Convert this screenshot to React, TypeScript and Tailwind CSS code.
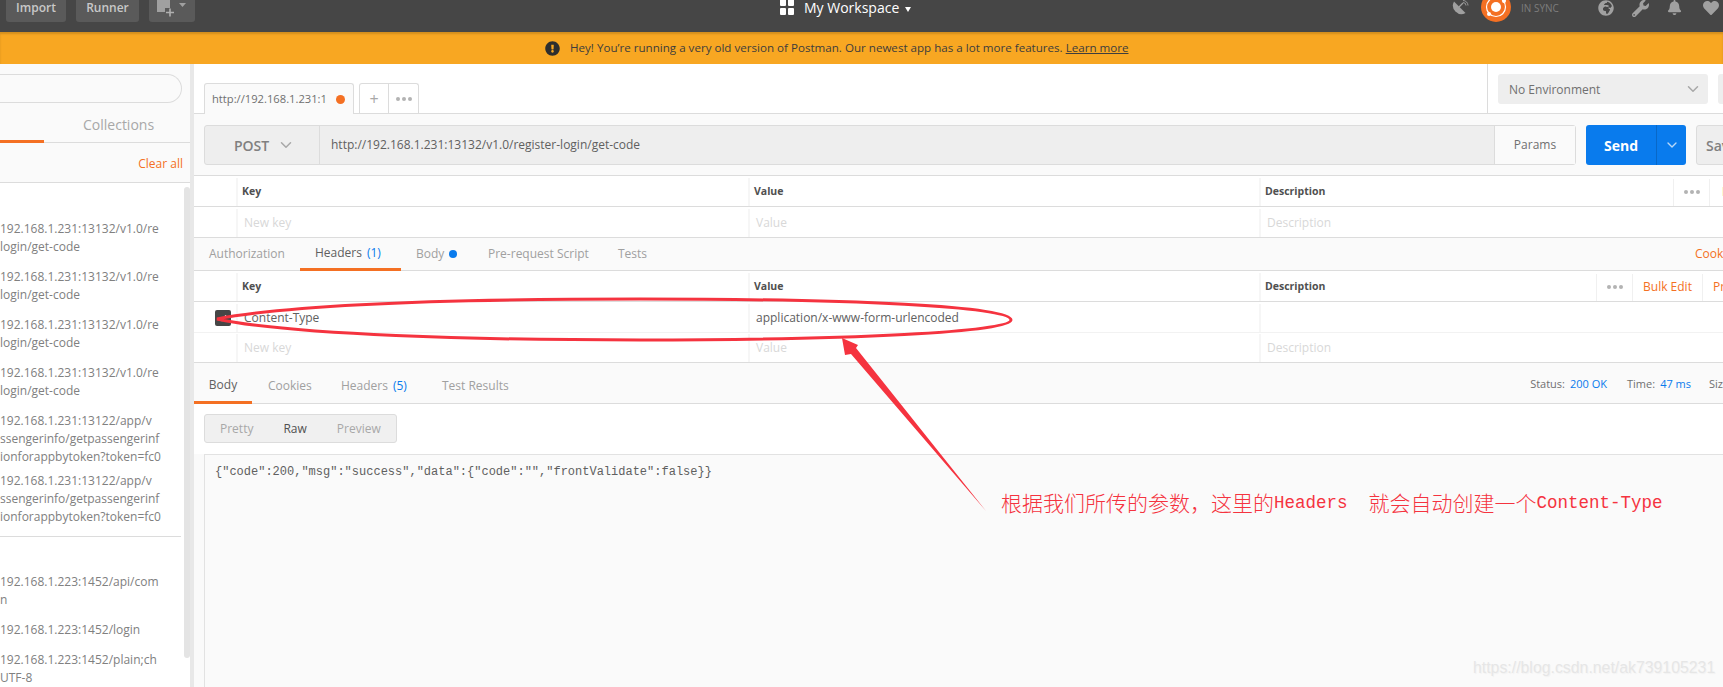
import { ReactNode } from 'react';
import { FaBell, FaExclamationCircle, FaGlobeAfrica, FaHeart, FaWrench } from 'react-icons/fa';
import { LuChevronDown } from 'react-icons/lu';

const registerUrl = ['192.168.1.231:13132/v1.0/re', 'login/get-code'];
const tokenUrl = ['192.168.1.231:13122/app/v', 'ssengerinfo/getpassengerinf', 'ionforappbytoken?token=fc0'];

const Dots = () => (
  <span className="flex gap-[2px]">
    <i className="size-[4px] rounded-full bg-[#b3b3b3]" />
    <i className="size-[4px] rounded-full bg-[#b3b3b3]" />
    <i className="size-[4px] rounded-full bg-[#b3b3b3]" />
  </span>
);

const HistoryItem = ({ lines, className = 'mb-[12px]' }: { lines: string[]; className?: string }) => (
  <div className={`${className} text-[12px] leading-[18px] text-[#808080] whitespace-nowrap`}>
    {lines.map((line) => (
      <div key={line}>{line}</div>
    ))}
  </div>
);

const TopBar = () => (
  <div className="h-8 shrink-0 flex items-start overflow-hidden bg-[#464646] text-[#c8c8c8]">
    <div className="ml-[6px] w-[60px] h-[22px] rounded-b-[3px] bg-[#5a5a5a] text-center text-[12px] font-semibold leading-[16px]">Import</div>
    <div className="ml-[10px] w-[63px] h-[22px] rounded-b-[3px] bg-[#5a5a5a] text-center text-[12px] font-semibold leading-[16px]">Runner</div>
    <div className="ml-[10px] w-[46px] h-[22px] rounded-b-[3px] bg-[#5a5a5a] flex items-start justify-center">
      <svg width="32" height="18" viewBox="0 0 32 18">
        <rect x="1" y="0" width="13" height="12" fill="#a0a0a0" />
        <rect x="9" y="8" width="10" height="10" fill="#5a5a5a" />
        <path d="M14 8.500v8M10 12.500h8" stroke="#b0b0b0" strokeWidth="1.600" />
        <path d="M23 3h7l-3.500 4z" fill="#a0a0a0" />
      </svg>
    </div>
    <div className="ml-[585px] flex items-center h-4 text-white">
      <span className="grid grid-cols-2 gap-[2px] w-[14px] -mt-[2px]">
        <i className="h-[7px] rounded-[1px] bg-white" />
        <i className="h-[7px] rounded-[1px] bg-white" />
        <i className="h-[7px] rounded-[1px] bg-white" />
        <i className="h-[7px] rounded-[1px] bg-white" />
      </span>
      <span className="ml-[10px] text-[14px] leading-[16px]">My Workspace</span>
      <span className="ml-[6px] mt-[2px] border-x-[3.500px] border-t-[5px] border-x-transparent border-t-white" />
    </div>
    <div className="ml-auto flex items-start text-[#a0a0a0]">
      <svg width="17" height="16" viewBox="0 0 17 16" fill="#a0a0a0">
        <path d="M2 1.500A8.500 8.500 0 0 0 13.500 13z" />
        <path d="M7 7l4-4" stroke="#a0a0a0" strokeWidth="1.200" />
        <path d="M11 0.500a5 5 0 0 1 5 5M11 2.500a3 3 0 0 1 3 3" fill="none" stroke="#a0a0a0" strokeWidth="0.900" />
      </svg>
      <svg width="30" height="30" viewBox="0 0 30 30" className="ml-[12px] -mt-[8px]">
        <circle cx="15" cy="15" r="15" fill="#f47023" />
        <circle cx="15" cy="15" r="9.500" fill="none" stroke="#fff" strokeWidth="1.200" />
        <circle cx="15" cy="15" r="5" fill="#fff" />
        <circle cx="23" cy="9" r="2" fill="#fff" />
        <circle cx="8" cy="22" r="2" fill="#fff" />
      </svg>
      <span className="ml-[10px] w-[77px] text-[10px] leading-[16px] text-[#7d7d7d]">IN SYNC</span>
      <FaGlobeAfrica className="size-[16px]" />
      <FaWrench className="ml-[18px] size-[17px]" />
      <FaBell className="ml-[18px] size-[15px]" />
      <FaHeart className="ml-[21px] mr-[4px] size-[16px]" />
    </div>
  </div>
);

const Banner = () => (
  <div className="h-8 shrink-0 flex items-center bg-[#f8a722] pl-[545px] text-[11.600px] text-[#3d3d3d] shadow-[inset_0_2px_2px_rgba(0,0,0,0.15)]">
    <FaExclamationCircle className="size-[15px] text-[#2e2e2e]" />
    <span className="ml-[10px]">Hey! You&#8217;re running a very old version of Postman. Our newest app has a lot more features.</span>
    <span className="ml-[3px] underline">Learn more</span>
  </div>
);

const Sidebar = () => (
  <div className="w-[194px] shrink-0 flex flex-col border-r-[4px] border-[#e8e8e8] bg-[#fafafa]">
    <div className="h-[39px] pt-[10px] pr-[8px]">
      <div className="h-[29px] rounded-r-[15px] border border-l-0 border-[#dcdcdc]" />
    </div>
    <div className="h-[40px] flex border-b border-[#dcdcdc]">
      <div className="w-[44px] h-[40px] border-b-[3px] border-[#f47023]" />
      <div className="ml-[39px] mt-[12px] text-[14px] leading-[20px] text-[#a8a8a8]">Collections</div>
    </div>
    <div className="h-[40px] border-b border-[#dcdcdc] pr-[7px] pt-[12px] text-right text-[12px] leading-[18px] text-[#f47023]">Clear all</div>
    <div className="flex-1 flex bg-white overflow-hidden">
      <div className="w-[184px] pt-[37px] overflow-hidden">
        <HistoryItem lines={registerUrl} />
        <HistoryItem lines={registerUrl} />
        <HistoryItem lines={registerUrl} />
        <HistoryItem lines={registerUrl} />
        <HistoryItem lines={tokenUrl} className="mb-[6px]" />
        <HistoryItem lines={tokenUrl} className="mb-[10px]" />
        <div className="w-[181px] border-t border-[#dcdcdc] mb-[36px]" />
        <HistoryItem lines={['192.168.1.223:1452/api/com', 'n']} />
        <HistoryItem lines={['192.168.1.223:1452/login']} />
        <HistoryItem lines={['192.168.1.223:1452/plain;ch', 'UTF-8']} />
      </div>
      <div className="w-[6px] h-[471px] mt-[4px] rounded-[3px] bg-[#e4e4e4]" />
    </div>
  </div>
);

const TabStrip = () => (
  <div className="h-[50px] shrink-0 flex bg-white border-b border-[#dcdcdc]">
    <div className="flex-1 flex items-end pl-[10px]">
      <div className="w-[150px] h-[31px] -mb-px flex items-center rounded-t-[3px] border border-b-0 border-[#dcdcdc] bg-[#fafafa] pl-[7px] text-[11.200px] text-[#707070]">
        http://192.168.1.231:1
        <i className="ml-[9px] size-[9px] rounded-full bg-[#f47023]" />
      </div>
      <div className="ml-[5px] flex h-[30px] rounded-t-[3px] border border-b-0 border-[#dcdcdc]">
        <div className="w-[29px] flex items-center justify-center border-r border-[#dcdcdc] text-[16px] leading-none text-[#a8a8a8]">+</div>
        <div className="w-[29px] flex items-center justify-center"><Dots /></div>
      </div>
    </div>
    <div className="w-[236px] flex overflow-hidden border-l border-[#dcdcdc] pl-[10px] pt-[10px]">
      <div className="w-[210px] h-[30px] shrink-0 flex items-center justify-between rounded-[3px] bg-[#eeeeee] pl-[11px] pr-[6px] text-[12px] text-[#707070]">
        <span className="mt-[2px]">No Environment</span>
        <LuChevronDown className="size-[18px] text-[#a8a8a8]" />
      </div>
      <div className="ml-[10px] w-[20px] h-[30px] shrink-0 rounded-l-[3px] bg-[#eeeeee]" />
    </div>
  </div>
);

const UrlBar = () => (
  <div className="h-[62px] shrink-0 flex bg-[#fafafa] pl-[10px] pt-[11px]">
    <div className="w-[1372px] h-[40px] shrink-0 flex rounded-[3px] border border-[#dcdcdc] bg-[#eeeeee]">
      <div className="w-[115px] flex items-center justify-center gap-[8px] border-r border-[#dcdcdc] pl-[5px] text-[14px] font-semibold text-[#808080]">
        POST
        <LuChevronDown className="size-[18px] text-[#a8a8a8]" />
      </div>
      <div className="flex-1 flex items-center pl-[11px] text-[12px] text-[#606060]">http://192.168.1.231:13132/v1.0/register-login/get-code</div>
      <div className="w-[81px] flex items-center justify-center border-l border-[#dcdcdc] bg-[#fafafa] text-[12px] text-[#707070]">Params</div>
    </div>
    <div className="ml-[10px] w-[100px] h-[40px] shrink-0 flex rounded-[3px] bg-[#097bed] text-white">
      <div className="w-[70px] flex items-center justify-center text-[14px] font-bold">Send</div>
      <div className="flex-1 flex items-center justify-center border-l border-[#0868c8]"><LuChevronDown className="size-[16px] text-[#b9d8f8]" /></div>
    </div>
    <div className="ml-[10px] w-[60px] h-[40px] shrink-0 flex items-center rounded-l-[3px] border border-[#dcdcdc] bg-[#eeeeee] pl-[9px] text-[14px] font-semibold text-[#808080]">Save</div>
  </div>
);

const TableRow = ({ cells, head, tools, soft, short }: { cells: string[]; head?: boolean; tools?: ReactNode; soft?: boolean; short?: boolean }) => {
  const filled = cells[0] === 'Content-Type';
  const tone = head ? 'text-[10.500px] font-bold text-[#505050] pl-[4px]' : filled ? 'text-[12px] text-[#606060] pl-[6px]' : 'text-[12px] text-[#d8d8d8] pl-[6px]';
  return (
    <div className={`${short ? 'h-[30px] pt-px' : 'h-[31px] pt-[2px]'} shrink-0 grid grid-cols-[42px_512px_511px_1fr] bg-white border-b ${soft ? 'border-[#f2f2f2]' : 'border-[#dcdcdc]'}`}>
      <div className="flex items-center pl-[21px]">
        {filled && (
          <span className="size-[16px] flex items-center justify-center rounded-[2px] bg-[#464646]">
            <svg width="10" height="10" viewBox="0 0 10 10"><path d="M2 5.500l2 2 4-5" fill="none" stroke="#fff" strokeWidth="1.500" /></svg>
          </span>
        )}
      </div>
      {cells.map((cell, i) => (
        <div key={i} className={`flex items-center border-l-2 border-[#f6f6f6] ${tone}`}>
          {cell}
          {i === 2 && tools}
        </div>
      ))}
    </div>
  );
};

const BulkTools = ({ bulk }: { bulk?: boolean }) => (
  <div className="ml-auto flex items-center h-[27px] font-normal">
    <div className="w-[37px] h-[27px] flex items-center justify-center border-x border-[#f0f0f0]"><Dots /></div>
    {bulk ? (
      <>
        <div className="w-[70px] h-[27px] flex items-center justify-center border-r border-[#f0f0f0] text-[12px] text-[#f47023]">Bulk Edit</div>
        <div className="w-[20px] pl-[10px] text-[12px] text-[#f47023] overflow-hidden">Pre</div>
      </>
    ) : (
      <div className="w-[13px] pl-[12px] text-[12px] text-[#f47023] overflow-hidden">Bulk</div>
    )}
  </div>
);

const RequestTabs = () => (
  <div className="h-[33px] shrink-0 flex border-b border-[#dcdcdc] bg-[#fafafa] pl-[15px] text-[12px] text-[#a0a0a0]">
    <div className="w-[91px] flex items-center h-[31px]">Authorization</div>
    <div className="w-[101px] h-[33px] flex items-center pl-[15px] pb-px border-b-[3px] border-[#f47023] text-[#606060]">
      Headers<span className="ml-[5px] text-[#097bed]">(1)</span>
    </div>
    <div className="ml-[15px] w-[72px] flex items-center h-[31px]">
      Body<i className="ml-[5px] size-[8px] rounded-full bg-[#097bed]" />
    </div>
    <div className="w-[130px] flex items-center h-[31px]">Pre-request Script</div>
    <div className="flex items-center h-[31px]">Tests</div>
    <div className="ml-auto flex items-center h-[31px] w-[28px] text-[#f47023] overflow-hidden whitespace-nowrap">Cookies</div>
  </div>
);

const ResponseBar = () => (
  <div className="h-[41px] shrink-0 flex border-b border-[#dcdcdc] bg-[#fafafa] text-[12px] text-[#a0a0a0]">
    <div className="w-[58px] h-[41px] flex items-center justify-center pt-[6px] border-b-[3px] border-[#f47023] text-[#606060]">Body</div>
    <div className="ml-[16px] w-[73px] flex items-center h-[40px] pt-[6px]">Cookies</div>
    <div className="w-[101px] flex items-center h-[40px] pt-[6px]">Headers<span className="ml-[5px] text-[#097bed]">(5)</span></div>
    <div className="flex items-center h-[40px] pt-[6px]">Test Results</div>
    <div className="ml-auto flex items-center h-[40px] pt-[2px] text-[11px] text-[#707070] whitespace-nowrap">
      Status:<span className="ml-[5px] text-[#097bed]">200 OK</span>
      <span className="ml-[20px]">Time:</span><span className="ml-[5px] text-[#097bed]">47 ms</span>
      <span className="ml-[18px] w-[14px] overflow-hidden">Size</span>
    </div>
  </div>
);

const Annotation = () => (
  <>
    <svg className="absolute left-0 top-0 pointer-events-none" width="1723" height="687">
      <path d="M217 319C300 303 480 299 640 299C850 299 1011 306 1011 320C1011 332 850 340 640 340C480 340 290 335 217 319Z" fill="none" stroke="#f5333f" strokeWidth="3" />
      <polygon points="842,338 858,345 856,348 986,511 851,354 845,355" fill="#f5333f" />
    </svg>
    <div className="absolute left-[1001px] top-[490px] flex items-center h-[26px] whitespace-nowrap text-[#f5333f] text-[21px] font-light font-['Noto_Sans_CJK_SC',sans-serif]">
      根据我们所传的参数，这里的
      <span className="font-['Liberation_Mono',monospace] text-[17.500px]">Headers</span>
      <span className="ml-[21px]">就会自动创建一个</span>
      <span className="font-['Liberation_Mono',monospace] text-[17.500px]">Content-Type</span>
    </div>
    <div className="absolute left-[1473px] top-[659px] font-['Liberation_Sans',sans-serif] text-[15.850px] leading-[18px] text-[#e6e6e6] [text-shadow:1px_1px_1px_#f2f2f2]">
      https://blog.csdn.net/ak739105231
    </div>
  </>
);

const App = () => {
  return (
    <div className="relative w-[1723px] h-[687px] flex flex-col overflow-hidden bg-[#fafafa] font-['Open_Sans',sans-serif]">
      <TopBar />
      <Banner />
      <div className="flex-1 flex min-h-0">
        <Sidebar />
        <div className="flex-1 min-w-0 flex flex-col">
          <TabStrip />
          <UrlBar />
          <div className="border-t border-[#dcdcdc] -mt-px" />
          <TableRow head cells={['Key', 'Value', 'Description']} tools={<BulkTools />} />
          <TableRow cells={['New key', 'Value', 'Description']} />
          <RequestTabs />
          <TableRow head cells={['Key', 'Value', 'Description']} tools={<BulkTools bulk />} />
          <TableRow soft cells={['Content-Type', 'application/x-www-form-urlencoded', '']} />
          <TableRow short cells={['New key', 'Value', 'Description']} />
          <ResponseBar />
          <div className="h-[50px] shrink-0 bg-white pl-[10px] pt-[10px]">
            <div className="w-[193px] h-[29px] flex items-center rounded-[3px] border border-[#dcdcdc] bg-[#f0f0f0] text-[12px] text-[#a8a8a8]">
              <span className="ml-[15px]">Pretty</span>
              <span className="ml-[30px] text-[#505050]">Raw</span>
              <span className="ml-[30px]">Preview</span>
            </div>
          </div>
          <div className="flex-1 ml-[10px] border-l border-t border-[#e2e2e2] bg-[#fafafa] pl-[10px] pt-[8px] font-['Liberation_Mono',monospace] text-[12px] leading-[18px] text-[#606060]">
            {'{"code":200,"msg":"success","data":{"code":"","frontValidate":false}}'}
          </div>
        </div>
      </div>
      <Annotation />
    </div>
  );
};

export default App;
